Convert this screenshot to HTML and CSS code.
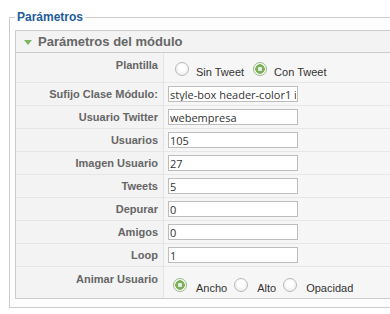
FILE: index.html
```html
<!DOCTYPE html>
<html lang="es">

<head>
    <meta charset="UTF-8">
    <meta name="viewport" content="width=device-width, initial-scale=1.0">
    <title>Parámetros</title>
    <link rel="stylesheet" href="styles.css">
</head>

<body>
    <fieldset class="params">
        <legend>Parámetros</legend>
        <div class="panel">
            <div class="panel-head">
                <span class="arrow"></span>
                <span>Parámetros del módulo</span>
            </div>

            <div class="row tall">
                <div class="label">Plantilla</div>
                <div class="value choices">
                    <span class="radio"></span><span class="opt">Sin Tweet</span>
                    <span class="radio checked"></span><span class="opt">Con Tweet</span>
                </div>
            </div>
            <div class="row">
                <div class="label">Sufijo Clase Módulo:</div>
                <div class="value"><input type="text" value="style-box header-color1 icon-twitter"></div>
            </div>
            <div class="row">
                <div class="label">Usuario Twitter</div>
                <div class="value"><input type="text" value="webempresa"></div>
            </div>
            <div class="row">
                <div class="label">Usuarios</div>
                <div class="value"><input type="text" value="105"></div>
            </div>
            <div class="row">
                <div class="label">Imagen Usuario</div>
                <div class="value"><input type="text" value="27"></div>
            </div>
            <div class="row">
                <div class="label">Tweets</div>
                <div class="value"><input type="text" value="5"></div>
            </div>
            <div class="row">
                <div class="label">Depurar</div>
                <div class="value"><input type="text" value="0"></div>
            </div>
            <div class="row">
                <div class="label">Amigos</div>
                <div class="value"><input type="text" value="0"></div>
            </div>
            <div class="row">
                <div class="label">Loop</div>
                <div class="value"><input type="text" value="1"></div>
            </div>
            <div class="row tall">
                <div class="label">Animar Usuario</div>
                <div class="value choices small">
                    <span class="radio checked"></span><span class="opt">Ancho</span>
                    <span class="radio"></span><span class="opt">Alto</span>
                    <span class="radio"></span><span class="opt">Opacidad</span>
                </div>
            </div>
        </div>
    </fieldset>
</body>

</html>
```

FILE: styles.css
```css
body {
    margin: 0;
    font-family: "Liberation Sans", Arial, sans-serif;
    background: #fff;
    overflow: hidden;
}

.params {
    margin: 10px 0 0 9px;
    padding: 6px 0 8px 5px;
    width: 430px;
    border: 1px solid #ccc;
    background: #fdfdfd;
}

.params legend {
    padding: 0 2px;
    font-size: 12px;
    line-height: 14px;
    font-weight: bold;
    color: #1f5c99;
}

.panel {
    border: 1px solid #ccc;
    background: #f5f5f5;
}

.panel-head {
    display: flex;
    align-items: center;
    height: 21px;
    padding-left: 8px;
    border-bottom: 1px solid #ccc;
    background: #f3f3f3;
    font-size: 13px;
    font-weight: bold;
    color: #666;
}

.arrow {
    width: 0;
    height: 0;
    margin: 1px 6px 0 0;
    border-left: 4px solid transparent;
    border-right: 4px solid transparent;
    border-top: 5px solid #7db65e;
}

.row {
    display: grid;
    grid-template-columns: 148px 1fr;
    height: 23px;
    border-bottom: 1px solid #e6e6e6;
    box-sizing: border-box;
}

.row.tall {
    height: 30px;
}

.row:last-child {
    height: 31px;
    border-bottom: 0;
}

.label {
    padding: 5px 5px 0 0;
    text-align: right;
    font-size: 11px;
    line-height: 13px;
    font-weight: bold;
    color: #666;
    border-right: 1px solid #e3e3e3;
    background: #f3f3f3;
}

.row.tall .label {
    padding-top: 6px;
}

.value {
    padding: 3px 0 0 4px;
    background: #f6f6f6;
}

.value input {
    display: block;
    width: 130px;
    height: 16px;
    margin: 0;
    padding: 0 1px;
    box-sizing: border-box;
    border: 1px solid #bdbdbd;
    background: #fff;
    font-family: "Open Sans", "DejaVu Sans", sans-serif;
    font-size: 11px;
    color: #333;
    outline: none;
}

.choices {
    display: flex;
    align-items: flex-start;
    padding: 9px 0 0 11px;
    font-size: 11px;
    color: #333;
}

.choices.small {
    padding-left: 9px;
    padding-top: 11px;
}

.radio {
    flex: none;
    width: 14px;
    height: 14px;
    margin-right: 7px;
    box-sizing: border-box;
    border: 1px solid #b8b8b8;
    border-radius: 50%;
    background: radial-gradient(circle at 50% 40%, #fff 0 3px, #eee 7px);
}

.radio.checked {
    border-color: #9cb88a;
    background: radial-gradient(circle, #e4eedb 0 2px, #7fb05c 2.5px 4.5px, #f6f9f3 5px);
}

.opt {
    margin: 4px 9px 0 0;
    line-height: 13px;
    white-space: nowrap;
}

.small .radio {
    margin-right: 9px;
}

.small .opt {
    margin: 4px 7px 0 0;
}
```
